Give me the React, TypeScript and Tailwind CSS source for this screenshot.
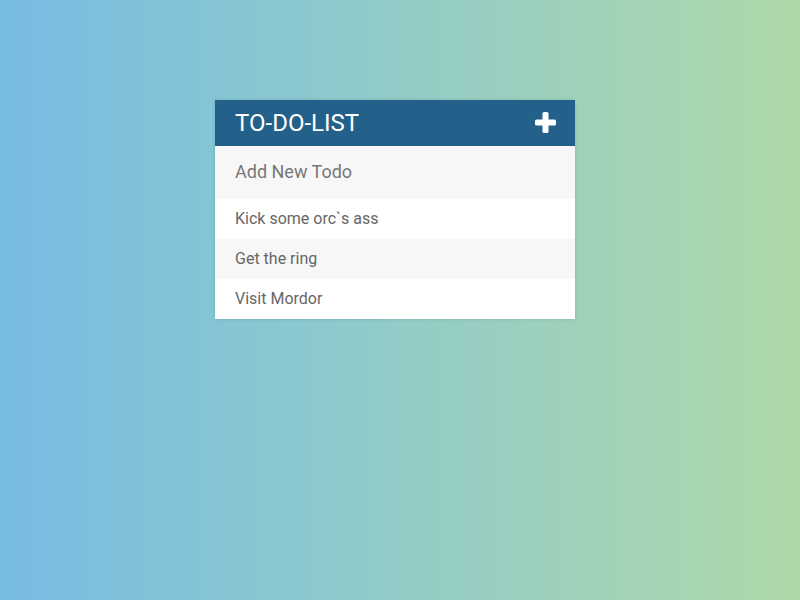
import React from 'react';

const todos = ['Kick some orc`s ass', 'Get the ring', 'Visit Mordor'];

export default function App() {
  return (
    <div
      className="w-full h-[600px] bg-gradient-to-r from-[#77bce3] to-[#aed9a8] pt-[100px]"
      style={{ fontFamily: 'Roboto, "Liberation Sans", sans-serif' }}
    >
      <div className="w-[360px] ml-[215px] bg-white shadow-[0_0_3px_rgba(0,0,0,0.15)]">
        <div className="h-[46px] bg-[#24618a] flex items-center justify-between pl-5 pr-[19px]">
          <h1 className="text-white text-[24px] font-normal leading-none">TO-DO-LIST</h1>
          <svg width="21" height="21" viewBox="0 0 21 21" className="mb-[2px]">
            <rect x="7.5" y="0" width="6" height="21" rx="1.5" fill="#fff" />
            <rect x="0" y="7.5" width="21" height="6" rx="1.5" fill="#fff" />
          </svg>
        </div>
        <input
          className="block w-full h-[53px] bg-[#f7f7f7] px-5 pb-[2px] text-[18px] text-[#666] placeholder:text-[#777] outline-none"
          placeholder="Add New Todo"
        />
        <ul>
          {todos.map((t, i) => (
            <li
              key={t}
              className={`h-10 flex items-center px-5 text-[16px] text-[#666] ${i % 2 === 1 ? 'bg-[#f7f7f7]' : 'bg-white'}`}
            >
              {t}
            </li>
          ))}
        </ul>
      </div>
    </div>
  );
}
